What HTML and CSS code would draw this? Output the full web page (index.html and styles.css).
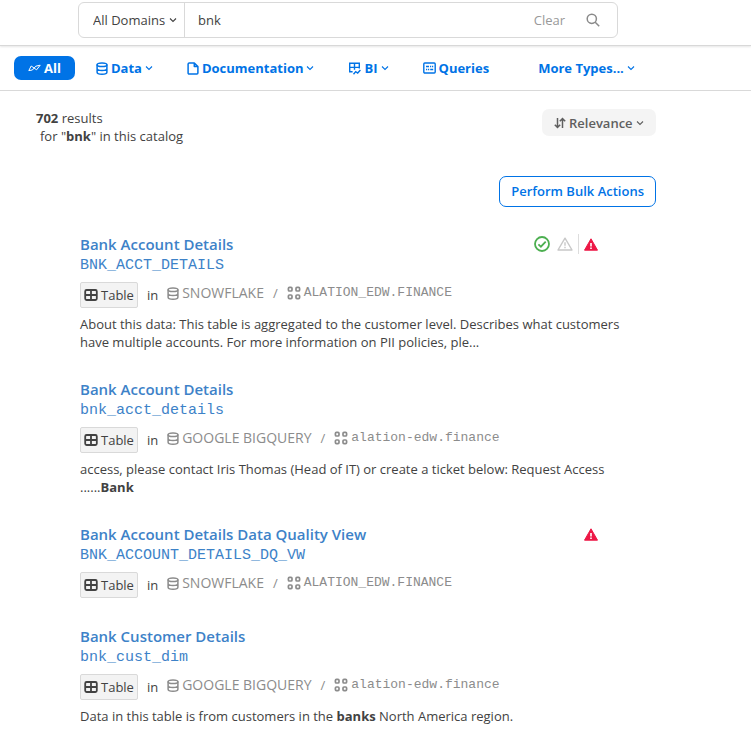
FILE: index.html
```html
<!DOCTYPE html>
<html lang="en">
<head>
    <meta charset="UTF-8">
    <meta name="viewport" content="width=device-width, initial-scale=1.0">
    <title>Catalog Search</title>
    <link rel="stylesheet" href="styles.css">
</head>
<body>
    <svg class="sprite" aria-hidden="true">
        <symbol id="chevron" viewBox="0 0 8 8"><path d="M1 2.5l3 3 3-3" fill="none" stroke="currentColor" stroke-width="1.1"/></symbol>
        <symbol id="database" viewBox="0 0 12 13" fill="none" stroke="currentColor" stroke-width="1.5">
            <ellipse cx="6" cy="2.7" rx="4.9" ry="1.8"/>
            <path d="M1.1 2.6v7.6c0 1.1 2.2 2 4.9 2s4.9-.9 4.9-2V2.6M1.1 6.4c0 1.1 2.2 2 4.9 2s4.9-.9 4.9-2"/>
        </symbol>
        <symbol id="schema" viewBox="0 0 14 14" fill="none" stroke="currentColor" stroke-width="1.7">
            <rect x="1.4" y="1.4" width="3.6" height="3.6" rx="1"/>
            <rect x="9" y="1.4" width="3.6" height="3.6" rx="1"/>
            <rect x="1.4" y="9" width="3.6" height="3.6" rx="1"/>
            <rect x="9" y="9" width="3.6" height="3.6" rx="1"/>
        </symbol>
        <symbol id="table" viewBox="0 0 14 12" fill="none" stroke="currentColor" stroke-width="1.8">
            <rect x="1.2" y="1" width="11.6" height="10" rx="1.4"/>
            <path d="M1.2 6h11.6M7 1v10"/>
        </symbol>
        <symbol id="alert" viewBox="0 0 14 13">
            <path d="M7 .8L13.5 12.2H.5z" fill="currentColor" stroke="currentColor" stroke-linejoin="round"/>
            <path d="M7 5v3.4M7 9.5v1.4" stroke="#fff" stroke-width="1.6"/>
        </symbol>
    </svg>

    <header class="header">
        <form class="search">
            <label class="domain">
                <select class="domain-select" aria-label="Domain">
                    <option>All Domains</option>
                </select>
                <svg class="chevron"><use href="#chevron"/></svg>
            </label>
            <input class="search-input" type="text" value="bnk" aria-label="Search">
            <button class="clear" type="reset">Clear</button>
            <button class="search-button" type="submit" aria-label="Search">
                <svg class="icon-search" viewBox="0 0 14 14" fill="none" stroke="currentColor" stroke-width="1.5"><circle cx="5.8" cy="5.8" r="4.6"/><path d="M9.2 9.2l4 4"/></svg>
            </button>
        </form>
    </header>

    <nav class="tabs">
        <button class="tab tab-active">
            <svg class="icon-all" viewBox="0 0 13 8" fill="none" stroke="currentColor" stroke-linejoin="round"><path d="M.8 6.6L3.2 2 8.6 5.8 12.2 1.2 7.8 2.2 4.4 6z"/></svg>
            All
        </button>
        <button class="tab">
            <svg class="icon-database"><use href="#database"/></svg>
            Data
            <svg class="chevron"><use href="#chevron"/></svg>
        </button>
        <button class="tab">
            <svg class="icon-document" viewBox="0 0 12 13" fill="none" stroke="currentColor" stroke-width="1.5" stroke-linejoin="round"><path d="M7.3 1H2.2A1.1 1.1 0 0 0 1.1 2v9a1 1 0 0 0 1 1h7.8a1 1 0 0 0 1-1V4.6zM7.3 1v3.6h3.6"/></svg>
            Documentation
            <svg class="chevron"><use href="#chevron"/></svg>
        </button>
        <button class="tab">
            <svg class="icon-bi" viewBox="0 0 13 13" fill="none" stroke="currentColor" stroke-width="1.4"><path d="M4.6 9.8H1.7V1.2h9.6v5.2M1 5.4h11M6.5 1.2v6.6M5.5 12.2l2.2-2.6 2 1.4L12.4 8"/></svg>
            BI
            <svg class="chevron"><use href="#chevron"/></svg>
        </button>
        <button class="tab">
            <svg class="icon-queries" viewBox="0 0 13 12" fill="none" stroke="currentColor" stroke-width="1.4"><rect x=".8" y="1" width="11.4" height="10" rx="1"/><path d="M3 4.5h3M7 4.5h1.2M9 4.5h1.2M3 7.5h1.2M5 7.5h1.2M7.2 7.5h3" stroke-width="1.3"/></svg>
            Queries
        </button>
        <button class="tab tab-more">
            More Types...
            <svg class="chevron"><use href="#chevron"/></svg>
        </button>
    </nav>

    <main class="main">
        <div class="summary">
            <p class="count"><b>702</b> results<br><span class="query">for "<b>bnk</b>" in this catalog</span></p>
            <label class="sort">
                <svg class="icon-sort" viewBox="0 0 12 12" fill="none" stroke="currentColor" stroke-width="1.5"><path d="M3.5 1v9.4M.8 7.8l2.7 2.7 2.7-2.7M8.5 11V1.6M5.8 4.2l2.7-2.7 2.7 2.7"/></svg>
                <select class="sort-select" aria-label="Sort by">
                    <option>Relevance</option>
                </select>
                <svg class="chevron"><use href="#chevron"/></svg>
            </label>
        </div>
        <div class="actions">
            <button class="bulk">Perform Bulk Actions</button>
        </div>

        <div class="results">
            <article class="result">
                <div class="result-head">
                    <h2 class="title"><a href="#">Bank Account Details</a></h2>
                    <div class="flags">
                        <svg class="flag-ok" viewBox="0 0 16 16" fill="none" stroke="currentColor" stroke-width="1.8"><circle cx="8" cy="8" r="7"/><path d="M4.4 8.4l2.5 2.3 4.8-5"/></svg>
                        <svg class="flag-warn" viewBox="0 0 16 14" fill="none" stroke="currentColor" stroke-width="1.4"><path d="M8 1.2L15 13H1z" stroke-linejoin="round"/><path d="M8 5.2v3.6M8 9.8v1.4"/></svg>
                        <span class="flag-line"></span>
                        <svg class="flag-alert"><use href="#alert"/></svg>
                    </div>
                </div>
                <a class="name" href="#">BNK_ACCT_DETAILS</a>
                <div class="meta">
                    <span class="tag"><svg class="icon-table"><use href="#table"/></svg>Table</span>
                    <span class="in">in</span>
                    <div class="path">
                        <svg class="icon-database"><use href="#database"/></svg>
                        <a class="source" href="#">SNOWFLAKE</a>
                        <span class="slash">/</span>
                        <svg class="icon-schema"><use href="#schema"/></svg>
                        <a class="schema" href="#">ALATION_EDW.FINANCE</a>
                    </div>
                </div>
                <p class="text">About this data: This table is aggregated to the customer level. Describes what customers have multiple accounts. For more information on PII policies, ple...</p>
            </article>

            <article class="result">
                <div class="result-head">
                    <h2 class="title"><a href="#">Bank Account Details</a></h2>
                </div>
                <a class="name" href="#">bnk_acct_details</a>
                <div class="meta">
                    <span class="tag"><svg class="icon-table"><use href="#table"/></svg>Table</span>
                    <span class="in">in</span>
                    <div class="path">
                        <svg class="icon-database"><use href="#database"/></svg>
                        <a class="source" href="#">GOOGLE BIGQUERY</a>
                        <span class="slash">/</span>
                        <svg class="icon-schema"><use href="#schema"/></svg>
                        <a class="schema" href="#">alation-edw.finance</a>
                    </div>
                </div>
                <p class="text">access, please contact Iris Thomas (Head of IT) or create a ticket below: Request Access ......<b>Bank</b></p>
            </article>

            <article class="result">
                <div class="result-head">
                    <h2 class="title"><a href="#">Bank Account Details Data Quality View</a></h2>
                    <div class="flags">
                        <svg class="flag-alert"><use href="#alert"/></svg>
                    </div>
                </div>
                <a class="name" href="#">BNK_ACCOUNT_DETAILS_DQ_VW</a>
                <div class="meta">
                    <span class="tag"><svg class="icon-table"><use href="#table"/></svg>Table</span>
                    <span class="in">in</span>
                    <div class="path">
                        <svg class="icon-database"><use href="#database"/></svg>
                        <a class="source" href="#">SNOWFLAKE</a>
                        <span class="slash">/</span>
                        <svg class="icon-schema"><use href="#schema"/></svg>
                        <a class="schema" href="#">ALATION_EDW.FINANCE</a>
                    </div>
                </div>
            </article>

            <article class="result">
                <div class="result-head">
                    <h2 class="title"><a href="#">Bank Customer Details</a></h2>
                </div>
                <a class="name" href="#">bnk_cust_dim</a>
                <div class="meta">
                    <span class="tag"><svg class="icon-table"><use href="#table"/></svg>Table</span>
                    <span class="in">in</span>
                    <div class="path">
                        <svg class="icon-database"><use href="#database"/></svg>
                        <a class="source" href="#">GOOGLE BIGQUERY</a>
                        <span class="slash">/</span>
                        <svg class="icon-schema"><use href="#schema"/></svg>
                        <a class="schema" href="#">alation-edw.finance</a>
                    </div>
                </div>
                <p class="text">Data in this table is from customers in the <b>banks</b> North America region.</p>
            </article>
        </div>
    </main>
</body>
</html>
```
FILE: styles.css
```css
* {
    box-sizing: border-box;
}

body {
    font-family: "Open Sans", "Liberation Sans", sans-serif;
    font-size: 13px;
    line-height: 18px;
    margin: 0;
    background-color: #fff;
    color: #424242;
}

button, input, select {
    font: inherit;
    color: inherit;
    border: none;
    background: none;
    padding: 0;
    margin: 0;
}

select {
    appearance: none;
}

button {
    cursor: pointer;
}

a {
    color: inherit;
    text-decoration: none;
}

p, h2 {
    margin: 0;
}

b {
    font-weight: 700;
}

svg {
    flex: none;
}

.sprite {
    display: none;
}

.chevron {
    width: 8px;
    height: 8px;
}

/* header */
.header {
    padding: 2px 78px 7px;
    border-bottom: 1px solid #d8d8d8;
    box-shadow: 0 1px 2px rgba(0, 0, 0, 0.1);
}

.search {
    display: flex;
    align-items: center;
    max-width: 540px;
    height: 36px;
    border: 1px solid #d9d9d9;
    border-radius: 6px;
}

.domain {
    display: flex;
    align-items: center;
    gap: 3px;
    height: 100%;
    padding: 0 7px 0 14px;
    border-right: 1px solid #d9d9d9;
}

.search-input {
    flex: 1;
    min-width: 0;
    height: 100%;
    padding: 0 13px;
    outline: none;
}

.clear {
    color: #999;
}

.search-button {
    display: flex;
    padding: 0 17px 0 21px;
    color: #8a8a8a;
}

.icon-search {
    width: 14px;
    height: 14px;
}

/* type tabs */
.tabs {
    display: flex;
    align-items: center;
    gap: 34px;
    height: 45px;
    padding: 0 14px;
    border-bottom: 1px solid #d9d9d9;
}

.tab {
    display: flex;
    align-items: center;
    gap: 3px;
    height: 24px;
    color: #0073e6;
    font-weight: 700;
    white-space: nowrap;
}

.tab-active {
    padding: 0 14px;
    margin-right: -13px;
    border-radius: 7px;
    background-color: #0073e6;
    color: #fff;
}

.tab-more {
    margin-left: 15px;
}

.icon-all {
    width: 13px;
    height: 8px;
}

.icon-database, .icon-document {
    width: 12px;
    height: 13px;
}

.icon-bi {
    width: 13px;
    height: 13px;
}

.icon-queries {
    width: 13px;
    height: 12px;
}

/* summary */
.main {
    max-width: 656px;
    padding: 18px 0 20px 36px;
}

.summary {
    display: flex;
    justify-content: space-between;
    align-items: flex-start;
    height: 38px;
}

.count {
    line-height: 18px;
}

.query {
    padding-left: 4px;
}

.sort {
    display: flex;
    align-items: center;
    gap: 3px;
    height: 27px;
    padding: 0 12px;
    border-radius: 7px;
    background-color: #f4f4f4;
    color: #5f5f5f;
    font-weight: 600;
}

.icon-sort {
    width: 12px;
    height: 12px;
}

.actions {
    display: flex;
    justify-content: flex-end;
    margin-top: 29px;
}

.bulk {
    height: 31px;
    padding: 0 11px 2px;
    border: 1px solid #0073e6;
    border-radius: 7px;
    color: #0073e6;
    font-weight: 600;
}

/* results */
.results {
    display: flex;
    flex-direction: column;
    gap: 28px;
    margin-top: 27px;
    padding: 0 34px 0 44px;
}

.result-head {
    display: flex;
    justify-content: space-between;
    align-items: center;
    height: 20px;
}

.title {
    font-size: 15px;
    font-weight: 600;
    line-height: 20px;
    color: #3d82c8;
}

.flags {
    display: flex;
    align-items: center;
    gap: 5px;
    margin-right: 24px;
}

.flag-ok {
    width: 16px;
    height: 16px;
    margin-right: 2px;
    color: #4caf50;
}

.flag-warn {
    width: 16px;
    height: 14px;
    color: #c8c8c8;
}

.flag-line {
    width: 1px;
    height: 20px;
    background-color: #ddd;
}

.flag-alert {
    width: 14px;
    height: 13px;
    color: #ed1846;
}

.name {
    display: block;
    font-family: "Liberation Mono", monospace;
    font-size: 15px;
    line-height: 24px;
    color: #3d82c8;
}

.meta {
    display: flex;
    align-items: center;
    margin-top: 4px;
}

.tag {
    display: flex;
    align-items: center;
    gap: 3px;
    height: 26px;
    padding: 0 3px;
    border: 1px solid #d9d9d9;
    border-radius: 2px;
    background-color: #f3f3f3;
}

.icon-table {
    width: 14px;
    height: 12px;
}

.in {
    margin: 0 9px;
}

.path {
    display: flex;
    align-items: center;
    gap: 3px;
    padding-bottom: 4px;
    color: #8c8c8c;
}

.source {
    font-size: 14px;
}

.slash {
    margin: 0 6px;
}

.icon-schema {
    width: 14px;
    height: 14px;
}

.schema {
    font-family: "Liberation Mono", monospace;
}

.text {
    margin-top: 7px;
}
```
